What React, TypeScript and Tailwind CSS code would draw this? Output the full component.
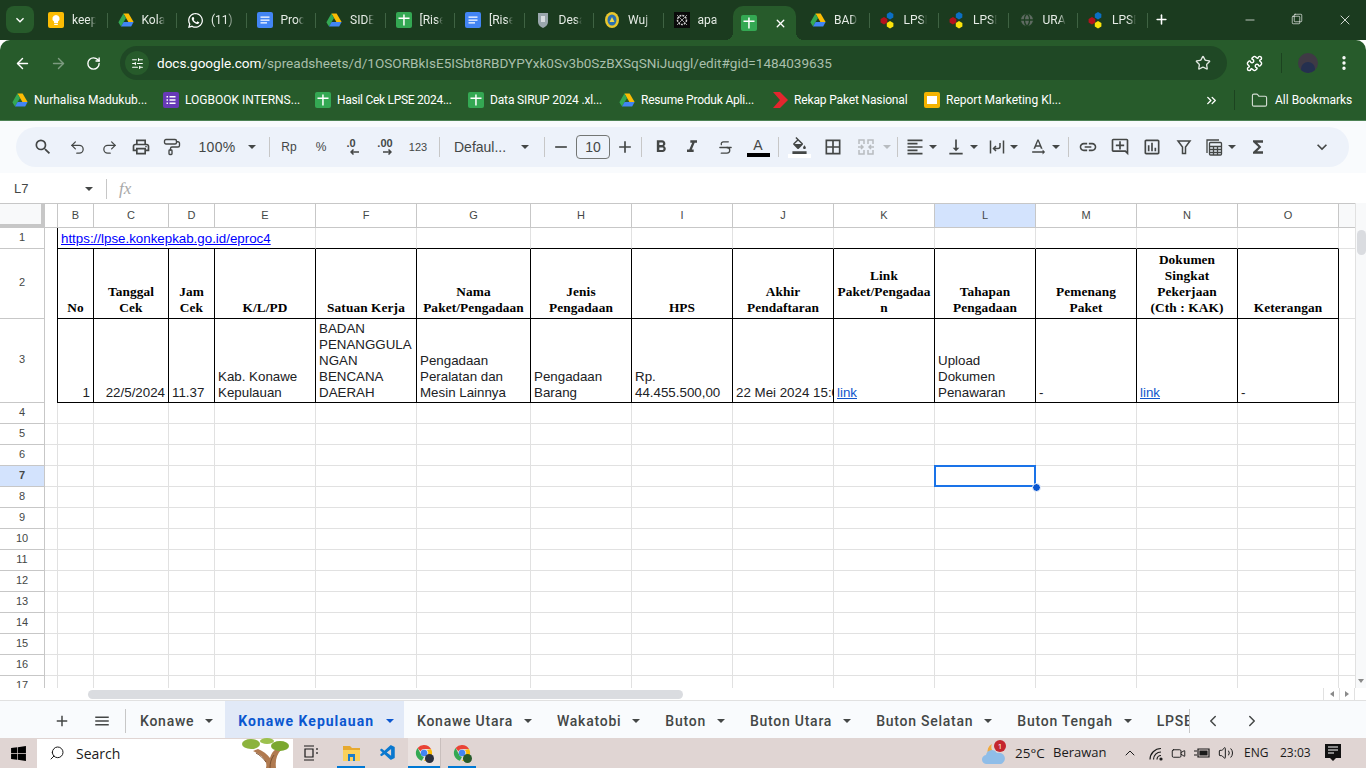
import type { ReactNode } from 'react'
import {
  ArrowLeft,
  ArrowRight,
  ChevronLeft,
  ChevronRight,
  ChevronUp,
  ChevronsRight,
  EllipsisVertical,
  Folder,
  Globe,
  Minus,
  PaintRoller,
  Plus,
  Puzzle,
  Redo2,
  RotateCw,
  Search,
  SlidersHorizontal,
  Square,
  Star,
  Strikethrough,
  Undo2,
  Video,
  Volume2,
  X,
} from 'lucide-react'
import {
  MdAdd,
  MdBorderAll,
  MdExpandMore,
  MdFormatAlignLeft,
  MdFormatBold,
  MdFormatItalic,
  MdFunctions,
  MdLink,
  MdMenu,
  MdOutlineAddComment,
  MdOutlineFormatColorFill,
  MdOutlineInsertChart,
  MdOutlinePrint,
  MdRemove,
  MdSearch,
  MdTextRotationNone,
  MdVerticalAlignBottom,
} from 'react-icons/md'
import { FaWhatsapp, FaWindows } from 'react-icons/fa'
import { VscVscode } from 'react-icons/vsc'

const gridCols =
  'grid grid-cols-[45px_13px_36px_75px_46px_101px_101px_114px_101px_101px_101px_101px_101px_101px_101px_101px_16px]'

const uiFont = "font-['Roboto',sans-serif]"
const taskFont = "font-['Open_Sans',sans-serif]"
const cellFont = "font-['Liberation_Sans',Arial,sans-serif]"
const headFont = "font-['Liberation_Serif','Times_New_Roman',serif]"

function SheetsIcon() {
  return (
    <svg width="16" height="16" viewBox="0 0 16 16" className="shrink-0">
      <rect width="16" height="16" rx="2" fill="#34a853" />
      <path d="M7.200 2.500h1.500v3h4.800v1.400H8.700v6.600H7.200V6.900H2.500V5.500h4.700z" fill="#fff" />
    </svg>
  )
}

function DocsIcon() {
  return (
    <svg width="16" height="16" viewBox="0 0 16 16" className="shrink-0">
      <rect width="16" height="16" rx="2" fill="#4285f4" />
      <path d="M3.500 4.500h9v1.300h-9zM3.500 7.400h9v1.300h-9zM3.500 10.300h6.500v1.300H3.500z" fill="#fff" />
    </svg>
  )
}

function DriveIcon() {
  return (
    <svg width="16" height="16" viewBox="0 0 16 16" className="shrink-0">
      <path d="M5.400 1.500h5.200l5 8.600h-5.200z" fill="#fbbc04" />
      <path d="M5.400 1.500.4 10.200l2.600 4.400 5-8.700z" fill="#34a853" />
      <path d="M3 14.600h10.200l2.400-4.500H5.600z" fill="#4285f4" />
    </svg>
  )
}

function LpseIcon() {
  return (
    <svg width="18" height="18" viewBox="0 0 18 18" className="shrink-0">
      <path d="M11 1l3.400 2-.1 3.600L11 8.400 7.800 6.600V3z" fill="#0b6fc4" />
      <path d="M5 6l3.300 2v3.600L5 13.400 1.600 11.600V8z" fill="#b3121d" />
      <path d="M11 10l3.400 2v3.600L11 17.400l-3.200-1.800V12z" fill="#fbe30a" />
    </svg>
  )
}

function ChromeIcon({ badge }: { badge: string }) {
  return (
    <span className="relative flex h-[18px] w-[18px]">
      <svg width="18" height="18" viewBox="0 0 18 18">
        <path d="M9 1a8 8 0 0 1 7 4H9a4 4 0 0 0-3.600 2.200L2.600 4A8 8 0 0 1 9 1z" fill="#ea4335" />
        <path d="M2.600 4l3.200 6A4 4 0 0 0 9 13l-2.200 3.700A8 8 0 0 1 2.600 4z" fill="#34a853" />
        <path d="M16 5a8 8 0 0 1-7 12l3.500-6A4 4 0 0 0 12 6z" fill="#fbbc04" />
        <circle cx="9" cy="9" r="3.200" fill="#4285f4" />
      </svg>
      <span className={`absolute -bottom-[1px] -right-[1px] h-[9px] w-[9px] rounded-full ${badge}`} />
    </span>
  )
}

type TabData = { icon: ReactNode; label: string }

const tabsLeft: TabData[] = [
  {
    icon: (
      <svg width="16" height="16" viewBox="0 0 16 16" className="shrink-0">
        <rect width="16" height="16" rx="2" fill="#fbbc04" />
        <path d="M8 3a3.600 3.600 0 0 0-2 6.600V11h4V9.600A3.600 3.600 0 0 0 8 3zM6.200 11.800h3.600V13H6.200z" fill="#fff" />
      </svg>
    ),
    label: 'keep',
  },
  { icon: <DriveIcon />, label: 'Kolal' },
  { icon: <FaWhatsapp className="h-[17px] w-[17px] shrink-0 text-white" />, label: '(11)' },
  { icon: <DocsIcon />, label: 'Proc' },
  { icon: <DriveIcon />, label: 'SIDE' },
  { icon: <SheetsIcon />, label: '[Rise' },
  { icon: <DocsIcon />, label: '[Rise' },
  {
    icon: (
      <svg width="16" height="18" viewBox="0 0 16 18" className="shrink-0">
        <path d="M3 2h10v9c0 3-2.500 5-5 6-2.500-1-5-3-5-6z" fill="#9aa7ad" />
        <rect x="6" y="5" width="4" height="6" fill="#d8dde0" />
      </svg>
    ),
    label: 'Desa',
  },
  {
    icon: (
      <svg width="16" height="18" viewBox="0 0 16 18" className="shrink-0">
        <ellipse cx="8" cy="9" rx="7" ry="8" fill="#e8c62d" />
        <ellipse cx="8" cy="9" rx="4.500" ry="5.500" fill="#2c6fb0" />
        <path d="M5.500 11h5L8 6z" fill="#f0d94a" />
      </svg>
    ),
    label: 'Wuj',
  },
  {
    icon: (
      <svg width="16" height="16" viewBox="0 0 16 16" className="shrink-0">
        <rect width="16" height="16" fill="#0a0a0a" />
        <circle cx="8" cy="8" r="4.500" fill="none" stroke="#cfcfcf" strokeWidth="1.500" strokeDasharray="2 1" />
        <path d="M3 3l10 10M13 3 3 13" stroke="#9a9a9a" strokeWidth="1" />
      </svg>
    ),
    label: 'apa',
  },
]

const tabsRight: TabData[] = [
  { icon: <DriveIcon />, label: 'BAD' },
  { icon: <LpseIcon />, label: 'LPSE' },
  { icon: <LpseIcon />, label: 'LPSE' },
  { icon: <Globe className="h-[16px] w-[16px] shrink-0 fill-[#5f6b62] text-[#1c3e20]" />, label: 'URA' },
  { icon: <LpseIcon />, label: 'LPSE' },
]

function BrowserTab({ tab, last }: { tab: TabData; last?: boolean }) {
  return (
    <div className="flex h-[34px] w-[69.5px] shrink-0 items-center pl-[10px]">
      <span className="flex w-[16px] shrink-0 justify-center">{tab.icon}</span>
      <span className="ml-[8px] w-[24px] overflow-hidden whitespace-nowrap text-[12px] text-[#e6ece6] [mask-image:linear-gradient(90deg,#000_70%,transparent)]">
        {tab.label}
      </span>
      {!last && <span className="ml-[11px] h-[15px] w-px shrink-0 bg-[#3f6343]" />}
    </div>
  )
}

function TabStrip() {
  return (
    <div className={`flex h-[40px] items-end bg-[#1b3b1f] ${uiFont}`}>
      <div className="mb-[7px] ml-[6px] mr-[4px] flex h-[27px] w-[28px] items-center justify-center rounded-[8px] bg-[#275b2b]">
        <MdExpandMore className="h-[16px] w-[16px] text-white" />
      </div>
      <div className="flex items-center self-start pt-[3px]">
        {tabsLeft.map((t, i) => (
          <BrowserTab key={i} tab={t} last={i === tabsLeft.length - 1} />
        ))}
      </div>
      <div className="relative flex h-[34px] w-[63px] shrink-0 items-center rounded-t-[10px] bg-[#275b2b] pl-[8px]">
        <span className="absolute -left-[8px] bottom-0 h-[8px] w-[8px] bg-[radial-gradient(circle_at_0_0,transparent_8px,#275b2b_8px)]" />
        <span className="absolute -right-[8px] bottom-0 h-[8px] w-[8px] bg-[radial-gradient(circle_at_100%_0,transparent_8px,#275b2b_8px)]" />
        <SheetsIcon />
        <X className="ml-[17px] h-[13px] w-[13px] text-white" strokeWidth={2.500} />
      </div>
      <div className="ml-[4px] flex items-center self-start pt-[3px]">
        {tabsRight.map((t, i) => (
          <BrowserTab key={i} tab={t} />
        ))}
      </div>
      <Plus className="mb-[13px] ml-[6px] h-[15px] w-[15px] text-white" strokeWidth={2.500} />
      <Minus className="mb-[13px] ml-[74px] h-[14px] w-[14px] text-white" strokeWidth={1.200} />
      <span className="relative mb-[13px] ml-[34px] h-[14px] w-[14px]">
        <Square className="absolute left-[0px] top-[2px] h-[10px] w-[10px] text-white" strokeWidth={1.500} />
        <Square className="absolute left-[2px] top-[0px] h-[10px] w-[10px] text-white" strokeWidth={1.500} />
      </span>
      <X className="mb-[12px] ml-[32px] h-[16px] w-[16px] text-white" strokeWidth={1.200} />
    </div>
  )
}

function NavBar() {
  return (
    <div className={`flex h-[40px] items-end rounded-t-[10px] bg-[#275b2b] ${uiFont}`}>
      <div className="flex h-[34px] items-center">
        <ArrowLeft className="ml-[14px] h-[17px] w-[17px] text-white" strokeWidth={2} />
        <ArrowRight className="ml-[19px] h-[17px] w-[17px] text-[#7d9b80]" strokeWidth={2} />
        <RotateCw className="ml-[19px] h-[15px] w-[15px] text-white" strokeWidth={2.200} />
        <div className="ml-[19px] flex h-[34px] w-[1107px] items-center rounded-full bg-[#1f4825]">
          <span className="ml-[5px] flex h-[24px] w-[24px] items-center justify-center rounded-full bg-[#275b2b]">
            <SlidersHorizontal className="h-[13px] w-[13px] text-white" />
          </span>
          <span className="ml-[8px] w-[1030px] whitespace-nowrap text-[13.550px] text-[#a9bfab]">
            <span className="text-white">docs.google.com</span>/spreadsheets/d/1OSORBkIsE5ISbt8RBDYPYxk0Sv3b0SzBXSqSNiJuqgl/edit#gid=1484039635
          </span>
          <Star className="ml-[8px] h-[16px] w-[16px] text-[#dfe6df]" strokeWidth={2} />
        </div>
        <Puzzle className="ml-[19px] h-[17px] w-[17px] text-white" strokeWidth={2} />
        <span className="ml-[18px] h-[20px] w-px bg-[#1c4320]" />
        <span className="ml-[16px] flex h-[20px] w-[20px] items-end justify-center overflow-hidden rounded-full bg-[#3f3a45]">
          <span className="h-[11px] w-[14px] rounded-t-full bg-[#24304f]" />
        </span>
        <EllipsisVertical className="ml-[17px] h-[18px] w-[18px] text-white" strokeWidth={2.500} />
      </div>
    </div>
  )
}

function Bookmark({ icon, label, className }: { icon: ReactNode; label: string; className: string }) {
  return (
    <div className={`flex items-center ${className}`}>
      {icon}
      <span className="ml-[6px] whitespace-nowrap text-[12px] text-white">{label}</span>
    </div>
  )
}

function BookmarksBar() {
  return (
    <div className={`flex h-[40px] items-center bg-[#275b2b] ${uiFont}`}>
      <Bookmark icon={<DriveIcon />} label="Nurhalisa Madukub..." className="ml-[12px] w-[151px]" />
      <Bookmark
        icon={
          <svg width="16" height="16" viewBox="0 0 16 16" className="shrink-0">
            <rect width="16" height="16" rx="2" fill="#673ab7" />
            <path d="M3.500 4h1.500v1.500H3.500zM6.500 4H12.500v1.500H6.500zM3.500 7.200h1.500v1.500H3.500zM6.500 7.200H12.500v1.500H6.500zM3.500 10.400h1.500v1.500H3.500zM6.500 10.400H12.500v1.500H6.500z" fill="#fff" />
          </svg>
        }
        label="LOGBOOK INTERNS..."
        className="w-[152px]"
      />
      <Bookmark icon={<SheetsIcon />} label="Hasil Cek LPSE 2024..." className="w-[153px] tracking-[-0.28px]" />
      <Bookmark icon={<SheetsIcon />} label="Data SIRUP 2024 .xl..." className="w-[151px] tracking-[-0.15px]" />
      <Bookmark icon={<DriveIcon />} label="Resume Produk Apli..." className="w-[154px] tracking-[-0.2px]" />
      <Bookmark
        icon={
          <svg width="15" height="16" viewBox="0 0 15 20" className="shrink-0" preserveAspectRatio="none">
            <path d="M0 0h7l8 10-8 10H0l7-10z" fill="#e3262e" />
          </svg>
        }
        label="Rekap Paket Nasional"
        className="w-[151px] tracking-[-0.15px]"
      />
      <Bookmark
        icon={
          <svg width="16" height="16" viewBox="0 0 16 16" className="shrink-0">
            <rect width="16" height="16" rx="2" fill="#f4b400" />
            <rect x="3" y="4" width="10" height="8" fill="#fff" />
          </svg>
        }
        label="Report Marketing Kl..."
        className="w-[280px]"
      />
      <ChevronsRight className="h-[15px] w-[15px] text-white" strokeWidth={2.200} />
      <span className="ml-[15px] h-[20px] w-px bg-[#1c4320]" />
      <Folder className="ml-[16px] h-[17px] w-[17px] text-[#d3ddd3]" strokeWidth={1.600} />
      <span className="ml-[7px] whitespace-nowrap text-[12px] text-white">All Bookmarks</span>
    </div>
  )
}

function Tool({ className, children }: { className: string; children: ReactNode }) {
  return <div className={`flex h-[40px] shrink-0 items-center justify-center ${className}`}>{children}</div>
}

function Sep({ className }: { className: string }) {
  return <span className={`h-[20px] w-px shrink-0 bg-[#c7c7c7] ${className}`} />
}

function Caret({ className, muted }: { className: string; muted?: boolean }) {
  return (
    <Tool className={className}>
      <span
        className={`h-0 w-0 border-x-[4px] border-t-[4px] border-x-transparent ${muted ? 'border-t-[#b8bcc0]' : 'border-t-[#444746]'}`}
      />
    </Tool>
  )
}

const ic = 'h-[20px] w-[20px] text-[#444746]'
const lu = 'h-[17px] w-[17px] text-[#444746]'

function Toolbar() {
  return (
    <div className="h-[53px] border-t border-[#4d8254] bg-[#f9fbfd] px-[16px] pt-[6px]">
      <div className={`flex h-[40px] w-[1333px] items-center rounded-full bg-[#edf2fa] text-[#444746] ${cellFont}`}>
        <Tool className="ml-[11px] w-[32px]"><MdSearch className={ic} /></Tool>
        <Tool className="ml-[2px] w-[32px]"><Undo2 className={lu} strokeWidth={1.800} /></Tool>
        <Tool className="w-[32px]"><Redo2 className={lu} strokeWidth={1.800} /></Tool>
        <Tool className="w-[32px]"><MdOutlinePrint className={ic} /></Tool>
        <Tool className="w-[30px]"><PaintRoller className="h-[18px] w-[18px] text-[#444746]" strokeWidth={1.800} /></Tool>
        <Tool className="ml-[10px] w-[40px] text-[14px] tracking-[0.3px]">100%</Tool>
        <Caret className="ml-[7px] w-[16px]" />
        <Sep className="ml-[9px]" />
        <Tool className="ml-[3px] w-[32px] text-[12px]">Rp</Tool>
        <Tool className="w-[32px] text-[12px]">%</Tool>
        <Tool className="w-[28px]">
          <span className="flex -translate-y-[1px] flex-col items-center text-[11px] font-bold leading-[11px]">
            .0
            <svg width="9" height="6" viewBox="0 0 9 6" className="ml-[6px]" fill="none" stroke="#444746" strokeWidth="1.500">
              <path d="M9 3H1M3.500.5 1 3l2.500 2.500" />
            </svg>
          </span>
        </Tool>
        <Tool className="w-[40px]">
          <span className="flex -translate-y-[1px] flex-col items-center text-[11px] font-bold leading-[11px]">
            .00
            <svg width="9" height="6" viewBox="0 0 9 6" className="ml-[6px]" fill="none" stroke="#444746" strokeWidth="1.500">
              <path d="M0 3h8M5.500.5 8 3 5.500 5.500" />
            </svg>
          </span>
        </Tool>
        <Tool className="w-[26px] text-[11px]">123</Tool>
        <Sep className="ml-[8px]" />
        <Tool className="ml-[14px] w-[54px] justify-start! text-[14px]">Defaul...</Tool>
        <Caret className="ml-[9px] w-[16px]" />
        <Sep className="ml-[11px]" />
        <Tool className="ml-[4px] w-[24px]"><MdRemove className={ic} /></Tool>
        <Tool className="ml-[3px] w-[34px]">
          <span className="flex h-[24px] w-[34px] items-center justify-center rounded-[4px] border border-[#747775] text-[14px]">10</span>
        </Tool>
        <Tool className="ml-[3px] w-[24px]"><MdAdd className={ic} /></Tool>
        <Sep className="ml-[4px]" />
        <Tool className="ml-[3px] w-[32px]"><MdFormatBold className={ic} /></Tool>
        <Tool className="w-[30px]"><MdFormatItalic className={ic} /></Tool>
        <Tool className="w-[36px]"><Strikethrough className={lu} strokeWidth={1.800} /></Tool>
        <Tool className="w-[30px]">
          <span className="flex w-[23px] flex-col items-center text-[14px] leading-[15px]">
            A
            <span className="h-[4px] w-[23px] bg-black" />
          </span>
        </Tool>
        <Sep className="ml-[5px]" />
        <Tool className="ml-[4px] w-[32px]">
          <span className="flex w-[23px] flex-col items-center">
            <MdOutlineFormatColorFill className="h-[17px] w-[17px] text-[#444746]" />
            <span className="h-[4px] w-[23px] bg-white" />
          </span>
        </Tool>
        <Tool className="ml-[2px] w-[32px]"><MdBorderAll className={ic} /></Tool>
        <Tool className="ml-[1px] w-[32px]">
          <svg width="18" height="18" viewBox="0 0 18 18" fill="none" stroke="#b8bcc0" strokeWidth="1.500">
            <path d="M2 6V2h5v4M2 12v4h5v-4M11 6V2h5v4M11 12v4h5v-4M1 9h5M4 7l2 2-2 2M17 9h-5M14 7l-2 2 2 2" />
          </svg>
        </Tool>
        <Caret className="w-[10px]" muted />
        <Sep className="ml-[5px]" />
        <Tool className="ml-[3px] w-[28px]"><MdFormatAlignLeft className={ic} /></Tool>
        <Caret className="w-[8px]" />
        <Tool className="ml-[5px] w-[28px]"><MdVerticalAlignBottom className={ic} /></Tool>
        <Caret className="w-[8px]" />
        <Tool className="ml-[6px] w-[26px]">
          <svg width="18" height="18" viewBox="0 0 18 18" fill="none" stroke="#444746" strokeWidth="1.500">
            <path d="M2.500 2.500v13M15.500 2.500v13M12 5v3.500a2 2 0 0 1-2 2H6M8 8l-2.500 2.500L8 13" />
          </svg>
        </Tool>
        <Caret className="w-[8px]" />
        <Tool className="ml-[6px] w-[28px]"><MdTextRotationNone className={ic} /></Tool>
        <Caret className="w-[8px]" />
        <Sep className="ml-[8px]" />
        <Tool className="ml-[3px] w-[32px]"><MdLink className={ic} /></Tool>
        <Tool className="w-[32px]"><MdOutlineAddComment className={ic} /></Tool>
        <Tool className="w-[32px]"><MdOutlineInsertChart className={ic} /></Tool>
        <Tool className="w-[32px]">
          <svg width="18" height="18" viewBox="0 0 18 18" fill="none" stroke="#444746" strokeWidth="1.500">
            <path d="M3 3h12l-4.500 6v6.500h-3V9z" />
          </svg>
        </Tool>
        <Tool className="w-[28px]">
          <svg width="18" height="18" viewBox="0 0 18 18" fill="none" stroke="#444746" strokeWidth="1.300">
            <path d="M2 15V2h12" />
            <rect x="4.500" y="4.500" width="12" height="12.500" rx="1" />
            <path d="M4.500 8.500h12M4.500 11.500h12M4.500 14.500h12M8.500 8.500V17M12.500 8.500V17" />
          </svg>
        </Tool>
        <Caret className="w-[8px]" />
        <Tool className="ml-[6px] w-[32px]"><MdFunctions className={ic} /></Tool>
        <Tool className="ml-[32px] w-[32px]"><MdExpandMore className={ic} /></Tool>
      </div>
    </div>
  )
}

function FormulaBar() {
  return (
    <div className={`flex h-[30px] items-center bg-white pt-[1px] text-[#444746] ${cellFont}`}>
      <span className="ml-[14px] w-[71px] text-[13px]">L7</span>
      <span className="h-0 w-0 border-x-[4px] border-t-[4px] border-x-transparent border-t-[#444746]" />
      <span className="ml-[13px] h-[20px] w-px bg-[#c7c7c7]" />
      <span className="ml-[12px] font-['Liberation_Serif',serif] text-[17px] italic text-[#a8a8a8]">fx</span>
    </div>
  )
}

const columns = ['B', 'C', 'D', 'E', 'F', 'G', 'H', 'I', 'J', 'K', 'L', 'M', 'N', 'O']

const headers: string[][] = [
  ['No'],
  ['Tanggal', 'Cek'],
  ['Jam', 'Cek'],
  ['K/L/PD'],
  ['Satuan Kerja'],
  ['Nama', 'Paket/Pengadaan'],
  ['Jenis', 'Pengadaan'],
  ['HPS'],
  ['Akhir', 'Pendaftaran'],
  ['Link', 'Paket/Pengadaa', 'n'],
  ['Tahapan', 'Pengadaan'],
  ['Pemenang', 'Paket'],
  ['Dokumen', 'Singkat', 'Pekerjaan', '(Cth : KAK)'],
  ['Keterangan'],
]

const values: { lines: string[]; align?: string; link?: boolean }[] = [
  { lines: ['1'], align: 'text-right' },
  { lines: ['22/5/2024'], align: 'text-right' },
  { lines: ['11.37'] },
  { lines: ['Kab. Konawe', 'Kepulauan'] },
  { lines: ['BADAN', 'PENANGGULA', 'NGAN', 'BENCANA', 'DAERAH'] },
  { lines: ['Pengadaan', 'Peralatan dan', 'Mesin Lainnya'] },
  { lines: ['Pengadaan', 'Barang'] },
  { lines: ['Rp.', '44.455.500,00'] },
  { lines: ['22 Mei 2024 15:00'] },
  { lines: ['link'], link: true },
  { lines: ['Upload', 'Dokumen', 'Penawaran'] },
  { lines: ['-'] },
  { lines: ['link'], link: true },
  { lines: ['-'] },
]

function RowHead({ label, active, className }: { label: string; active?: boolean; className: string }) {
  return (
    <div
      className={`flex items-center justify-center border-b border-r border-[#c7c7c7] pb-[2px] text-[11px] text-[#444746] ${
        active ? 'bg-[#d3e3fd] font-bold' : 'bg-white'
      } ${className}`}
    >
      {label}
    </div>
  )
}

function EmptyRow({ n }: { n: number }) {
  return (
    <div className={`${gridCols} h-[21px]`}>
      <RowHead label={String(n)} active={n === 7} className="h-[21px]" />
      <div className="border-b border-r border-[#e1e1e1]" />
      {columns.map((c) => (
        <div key={c} className="relative border-b border-r border-[#e1e1e1]">
          {n === 7 && c === 'L' && (
            <span className="absolute -left-[1px] -top-[1px] z-10 h-[22px] w-[102px] border-2 border-[#1a73e8]">
              <span className="absolute -bottom-[7px] -right-[7px] h-[9px] w-[9px] rounded-full border border-white bg-[#0b57d0]" />
            </span>
          )}
        </div>
      ))}
      <div className="border-b border-[#e1e1e1]" />
    </div>
  )
}

function SheetGrid() {
  const rows = [4, 5, 6, 7, 8, 9, 10, 11, 12, 13, 14, 15, 16, 17]
  return (
    <div className={`flex h-[485px] overflow-hidden bg-white ${cellFont}`}>
      <div className="w-[1355px] shrink-0">
        <div className={`${gridCols} h-[25px] border-t border-[#c7c7c7]`}>
          <div className="border-b-[4px] border-r-[4px] border-[#c7c7c7] bg-[#f8f9fa]" />
          <div className="border-b border-r border-[#c7c7c7]" />
          {columns.map((c) => (
            <div
              key={c}
              className={`flex items-center justify-center border-b border-r border-[#c7c7c7] text-[11px] text-[#444746] ${
                c === 'L' ? 'bg-[#d3e3fd] text-[#0b1f44]' : 'bg-white'
              }`}
            >
              {c}
            </div>
          ))}
          <div className="border-b border-[#c7c7c7] bg-[#f8f9fa]" />
        </div>

        <div className={`${gridCols} h-[21px]`}>
          <RowHead label="1" className="h-[21px]" />
          <div className="border-r border-black" />
          <div className="col-span-4 flex items-end whitespace-nowrap border-b border-r border-b-black border-r-[#e1e1e1] pb-[1px] pl-[3px] text-[13.330px] leading-[16px] text-[#0000ff] underline">
            https://lpse.konkepkab.go.id/eproc4
          </div>
          {columns.slice(4).map((c) => (
            <div key={c} className="border-b border-r border-b-black border-r-[#e1e1e1]" />
          ))}
          <div className="border-b border-[#e1e1e1]" />
        </div>

        <div className={`${gridCols} h-[70px]`}>
          <RowHead label="2" className="h-[70px]" />
          <div className="border-r border-black" />
          {headers.map((lines, i) => (
            <div
              key={i}
              className={`flex flex-col justify-end overflow-hidden border-b border-r border-black pb-[2px] text-center text-[13.330px] font-bold leading-[16px] tracking-[0.1px] text-black ${headFont}`}
            >
              {lines.map((l) => (
                <span key={l} className="whitespace-nowrap">{l}</span>
              ))}
            </div>
          ))}
          <div className="border-b border-[#e1e1e1]" />
        </div>

        <div className={`${gridCols} h-[84px]`}>
          <RowHead label="3" className="h-[84px]" />
          <div className="border-r border-black" />
          {values.map((v, i) => (
            <div
              key={i}
              className={`flex flex-col justify-end overflow-hidden border-b border-r border-black px-[3px] pb-[1px] text-[13.330px] leading-[16px] ${v.align ?? 'text-left'} ${v.link ? 'text-[#1155cc] underline' : 'text-[#202124]'}`}
            >
              {v.lines.map((l) => (
                <span key={l} className="whitespace-nowrap">{l}</span>
              ))}
            </div>
          ))}
          <div className="border-b border-[#e1e1e1]" />
        </div>

        {rows.map((n) => (
          <EmptyRow key={n} n={n} />
        ))}
      </div>

      <div className="relative w-[11px] border-l border-[#e1e1e1] bg-[#f8f9fa]">
        <span className="absolute left-[1px] top-[27px] h-[25px] w-[9px] rounded-full bg-[#dadce0]" />
        <span className="absolute bottom-[5px] left-[2px] h-0 w-0 border-x-[3px] border-t-[4px] border-x-transparent border-t-[#8a8a8a]" />
      </div>
    </div>
  )
}

function HScrollBar() {
  return (
    <div className="flex h-[13px] items-center border-b border-[#e1e1e1] bg-white">
      <span className="ml-[88px] h-[9px] w-[595px] rounded-full bg-[#dadce0]" />
      <div className="ml-[640px] flex h-full w-[16px] items-center justify-center border-l border-[#e1e1e1]">
        <span className="h-0 w-0 border-y-[3px] border-r-[4px] border-y-transparent border-r-[#8a8a8a]" />
      </div>
      <div className="flex h-full w-[16px] items-center justify-center border-x border-[#e1e1e1]">
        <span className="h-0 w-0 border-y-[3px] border-l-[4px] border-y-transparent border-l-[#8a8a8a]" />
      </div>
    </div>
  )
}

function SheetTab({ label, className }: { label: string; className: string }) {
  return (
    <div className={`flex h-full items-center whitespace-nowrap pl-[13px] pt-[3px] ${className}`}>
      {label}
      <span className="ml-[11px] mr-[12px] h-0 w-0 border-x-[4px] border-t-[4px] border-x-transparent border-t-[#444746]" />
    </div>
  )
}

function SheetTabs() {
  const rest = ['Konawe Utara', 'Wakatobi', 'Buton', 'Buton Utara', 'Buton Selatan', 'Buton Tengah']
  return (
    <div className="flex h-[37px] items-center bg-[#f9fbfd] font-['Roboto',sans-serif] text-[14px] font-medium tracking-[0.75px] text-[#444746]">
      <MdAdd className="ml-[53px] mt-[3px] h-[18px] w-[18px]" />
      <MdMenu className="ml-[22px] mt-[3px] h-[18px] w-[18px]" />
      <span className="ml-[14px] mt-[3px] h-[24px] w-px bg-[#c7c7c7]" />
      <SheetTab label="Konawe" className="ml-[1px]" />
      <div className="flex h-full items-center whitespace-nowrap bg-[#e1e9f7] pl-[13px] pt-[3px] font-bold tracking-[1px] text-[#0b57d0]">
        Konawe Kepulauan
        <span className="ml-[12px] mr-[10px] h-0 w-0 border-x-[4px] border-t-[4px] border-x-transparent border-t-[#0b57d0]" />
      </div>
      {rest.map((t) => (
        <SheetTab key={t} label={t} className="" />
      ))}
      <div className="flex h-full w-[45px] items-center overflow-hidden whitespace-nowrap pl-[13px] pt-[3px]">LPSE</div>
      <span className="mt-[3px] h-[24px] w-px bg-[#c7c7c7]" />
      <ChevronLeft className="ml-[14px] mt-[3px] h-[18px] w-[18px]" />
      <ChevronRight className="ml-[21px] mt-[3px] h-[18px] w-[18px]" />
    </div>
  )
}

function Taskbar() {
  return (
    <div className={`flex h-[30px] items-center bg-[#e0d5d3] text-[#1a1a1a] ${taskFont}`}>
      <FaWindows className="ml-[10px] h-[17px] w-[17px] text-black" />
      <div className="relative ml-[10px] flex h-[29px] w-[256px] items-center bg-white">
        <Search className="ml-[12px] h-[16px] w-[16px] -scale-x-100" strokeWidth={1.500} />
        <span className="ml-[11px] text-[14px]">Search</span>
        <svg width="50" height="30" viewBox="0 0 50 30" className="absolute -top-[1px] right-[3px]">
          <path d="M26 30c2-7-4-13-13-17l5-2c5 2 9 5 12 9 1-4 3-7 6-9l5 1c-4 4-6 10-5 18z" fill="#b07a50" />
          <path d="M30 30c0-5 1-9 4-13M26 24c-3-4-6-7-10-9" stroke="#7d5232" strokeWidth="1" fill="none" />
          <ellipse cx="11" cy="6" rx="9" ry="5" fill="#8cb33d" />
          <ellipse cx="27" cy="3" rx="7" ry="3" fill="#9cc14e" />
          <ellipse cx="40" cy="8" rx="9" ry="5" fill="#7ba82f" />
        </svg>
      </div>
      <svg width="16" height="16" viewBox="0 0 16 16" className="ml-[10px]" fill="none" stroke="#1a1a1a" strokeWidth="1.200">
        <path d="M1 1h10M1 15h10M2 4h8v8H2zM14 3v2M14 7v2" />
      </svg>
      <div className="relative ml-[18px] flex h-[30px] w-[28px] items-center justify-center">
        <svg width="17" height="16" viewBox="0 0 17 16">
          <path d="M0 1h7l2 2h8v3H0z" fill="#e7a92f" />
          <path d="M0 5h17v11H0z" fill="#fbd15b" />
          <path d="M5 9h7v7H10v-4H7v4H5z" fill="#1c7cc9" />
        </svg>
        <span className="absolute bottom-0 left-0 h-[2px] w-full bg-[#0078d4]" />
      </div>
      <div className="ml-[5px] flex h-[30px] w-[36px] items-center justify-center">
        <VscVscode className="h-[18px] w-[18px] text-[#0a78cf]" />
      </div>
      <div className="relative ml-[2px] flex h-[30px] w-[33px] items-center justify-center border-r border-[#c9bfbd] bg-[#eae2e0]">
        <ChromeIcon badge="bg-[#2b2f3d]" />
        <span className="absolute bottom-0 left-0 h-[2px] w-full bg-[#0078d4]" />
      </div>
      <div className="relative ml-[7px] flex h-[30px] w-[28px] items-center justify-center">
        <ChromeIcon badge="bg-[#275b2b]" />
        <span className="absolute bottom-0 left-0 h-[2px] w-full bg-[#0078d4]" />
      </div>
      <div className="relative ml-[506px] h-[24px] w-[24px]">
        <svg width="24" height="24" viewBox="0 0 24 24">
          <path d="M10 3a6 6 0 0 0 2 8l-6 2A8 8 0 0 1 10 3z" fill="#f2a93b" />
          <path d="M5 23a4.500 4.500 0 0 1-1-9 6 6 0 0 1 11-2 5.500 5.500 0 0 1 4 11z" fill="#8fbde8" />
        </svg>
        <span className="absolute -top-[1px] right-[0px] flex h-[12px] w-[12px] items-center justify-center rounded-full bg-[#c4262e] text-[8px] text-white">1</span>
      </div>
      <span className="ml-[9px] w-[30px] whitespace-nowrap text-[13.500px]">25°C</span>
      <span className="ml-[8px] w-[52px] whitespace-nowrap text-[13px]">Berawan</span>
      <ChevronUp className="ml-[17px] h-[16px] w-[16px]" strokeWidth={1.500} />
      <svg width="15" height="15" viewBox="0 0 15 15" className="ml-[10px]" fill="none" stroke="#1a1a1a" strokeWidth="1.200">
        <path d="M2 13.500A11 11 0 0 1 13 2.500M5.500 13.500A7.500 7.500 0 0 1 13 6M9 13.500A4 4 0 0 1 13 9.500" />
        <circle cx="13" cy="13" r="1" fill="#1a1a1a" />
      </svg>
      <Video className="ml-[8px] h-[15px] w-[15px]" strokeWidth={1.500} />
      <svg width="16" height="12" viewBox="0 0 16 12" className="ml-[8px]" fill="none" stroke="#1a1a1a" strokeWidth="1.200">
        <path d="M4 2h11v8H4z" />
        <path d="M6 4h7v4H6z" fill="#1a1a1a" />
        <path d="M0 4h3M0 8h3" />
      </svg>
      <Volume2 className="ml-[8px] h-[16px] w-[16px]" strokeWidth={1.500} />
      <span className="ml-[10px] w-[24px] whitespace-nowrap text-[12px]">ENG</span>
      <span className="ml-[12px] w-[28px] whitespace-nowrap text-[12px]">23:03</span>
      <svg width="16" height="18" viewBox="0 0 16 18" className="ml-[17px]">
        <path d="M0 0h16v14h-5l-3 3-3-3H0z" fill="#111" />
        <path d="M3 3h10M3 6h10M3 9h6" stroke="#fff" strokeWidth="1" />
      </svg>
    </div>
  )
}

export default function App() {
  return (
    <div className="h-[768px] w-[1366px] overflow-hidden bg-white">
      <TabStrip />
      <NavBar />
      <BookmarksBar />
      <Toolbar />
      <FormulaBar />
      <SheetGrid />
      <HScrollBar />
      <SheetTabs />
      <Taskbar />
    </div>
  )
}
